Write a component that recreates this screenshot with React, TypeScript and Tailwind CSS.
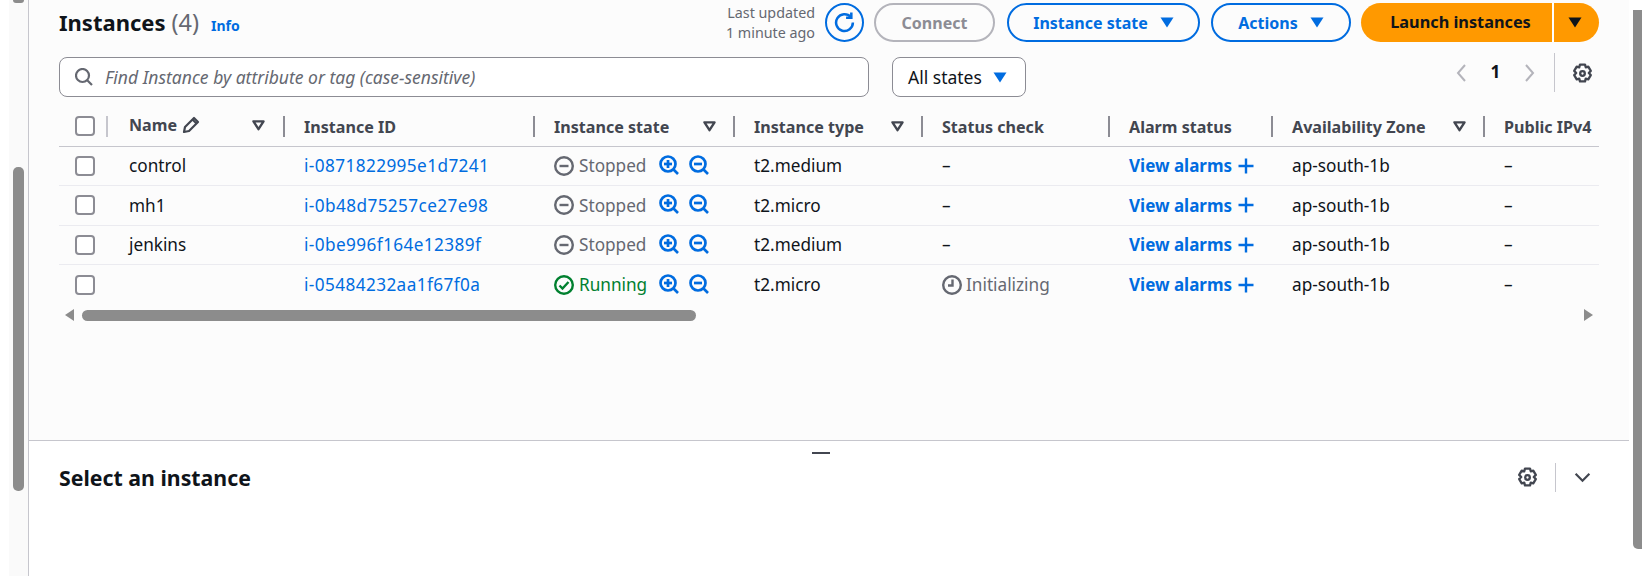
import { FC } from "react";

const Caret: FC<{ className?: string }> = ({ className = "" }) => (
  <svg viewBox="0 0 14 11" className={`w-[14px] h-[11px] ${className}`}>
    <path d="M0.5 0.5h13L7 10.5z" fill="currentColor" />
  </svg>
);

const FilterIcon = () => (
  <svg viewBox="0 0 14 12" className="w-[13px] h-[11px] text-[#424650]">
    <path d="M1.5 1.5h11L7 10z" fill="none" stroke="currentColor" strokeWidth="2.6" strokeLinejoin="round" />
  </svg>
);

const Gear = ({ className = "" }: { className?: string }) => (
  <svg viewBox="0 0 20 20" className={`w-[21px] h-[21px] ${className}`} fill="none" stroke="currentColor" strokeWidth="2.2" strokeLinejoin="round">
    <path d="M7.6 1.5h4.8l.7 2.6 2.4-.7 2.4 4.1-1.9 2 1.9 2-2.4 4.1-2.4-.7-.7 2.6H7.6l-.7-2.6-2.4.7-2.4-4.1 1.9-2-1.9-2 2.4-4.1 2.4.7z" />
    <circle cx="10" cy="10" r="2.2" />
  </svg>
);

const StoppedIcon = () => (
  <svg viewBox="0 0 20 20" className="w-[20px] h-[20px] shrink-0 text-[#656871]" fill="none" stroke="currentColor" strokeWidth="2.4">
    <circle cx="10" cy="10" r="8.8" />
    <path d="M5.5 10h9" />
  </svg>
);

const RunningIcon = () => (
  <svg viewBox="0 0 20 20" className="w-[20px] h-[20px] shrink-0 text-[#00802f]" fill="none" stroke="currentColor" strokeWidth="2.4">
    <circle cx="10" cy="10" r="8.8" />
    <path d="M5.5 10.5l3 3 6-6.5" />
  </svg>
);

const ClockIcon = () => (
  <svg viewBox="0 0 20 20" className="w-[20px] h-[20px] shrink-0 text-[#656871]" fill="none" stroke="currentColor" strokeWidth="2.4">
    <circle cx="10" cy="10" r="8.8" />
    <path d="M10.5 4.5v6h-4.5" />
  </svg>
);

const ZoomIcon = ({ plus }: { plus?: boolean }) => (
  <svg viewBox="0 0 20 20" className="w-[20px] h-[20px] shrink-0 text-[#006ce0]" fill="none" stroke="currentColor" strokeWidth="2.7">
    <circle cx="9" cy="9" r="7.5" />
    <path d="M14.5 14.5l4.5 4.5" />
    <path d="M5 9h8" />
    {plus && <path d="M9 5v8" />}
  </svg>
);

const Divider = () => <span className="w-[2px] h-[21px] bg-[#8c8c94] shrink-0" />;

const columns = [
  { title: "Instance ID" },
  { title: "Instance state", filter: true },
  { title: "Instance type", filter: true },
  { title: "Status check" },
  { title: "Alarm status" },
  { title: "Availability Zone", filter: true },
  { title: "Public IPv4" },
];

const rows = [
  { name: "control", id: "i-0871822995e1d7241", running: false, type: "t2.medium", check: "–" },
  { name: "mh1", id: "i-0b48d75257ce27e98", running: false, type: "t2.micro", check: "–" },
  { name: "jenkins", id: "i-0be996f164e12389f", running: false, type: "t2.medium", check: "–" },
  { name: "", id: "i-05484232aa1f67f0a", running: true, type: "t2.micro", check: "Initializing" },
];

const grid = "grid grid-cols-[49px_175px_250px_200px_188px_187px_163px_212px_116px]";

const Checkbox = () => (
  <span className="block w-[20px] h-[20px] rounded-[4px] border-2 border-[#8c8c94] bg-white ml-[16px]" />
);

const OutlineButton = ({ label, width }: { label: string; width: string }) => (
  <button className={`${width} h-[39px] rounded-full border-2 border-[#006ce0] text-[#006ce0] font-bold text-[16px] flex items-center justify-center gap-[12px]`}>
    {label}
    <Caret />
  </button>
);

export default function App() {
  return (
    <div className="w-[1642px] h-[576px] overflow-hidden flex bg-white text-[17.2px] text-[#0f141a] font-['Noto_Sans',sans-serif]">
      <div className="w-[28px] shrink-0 pl-[13px] border-l-[9px] border-white bg-[#fafafa] flex flex-col box-border">
        <div className="w-[11px] -ml-[9px] h-[3px] bg-[#8c8c8c] rounded-b-[5px]" />
        <div className="w-[11px] -ml-[9px] mt-[164px] h-[324px] bg-[#8c8c8c] rounded-[5px]" />
      </div>
      <div className="w-[1601px] shrink-0 border-l border-[#c6c6cd] flex flex-col">
        <div className="h-[440px] bg-[#fcfcfc] pl-[30px] border-b border-[#c6c6cd] box-content">
          <div className="h-[57px] pr-[30px] flex items-start justify-between pt-[3px]">
            <div className="flex items-baseline mt-[4px]">
              <h1 className="text-[22px] leading-[30px] font-bold">Instances</h1>
              <span className="text-[23.5px] leading-[30px] text-[#656871] ml-[6px]">(4)</span>
              <span className="text-[14px] font-bold text-[#006ce0] ml-[12px]">Info</span>
            </div>
            <div className="flex items-center">
              <div className="h-[39px] text-[14.3px] leading-[19.5px] text-[#656871] text-right mr-[10px]">
                <div>Last updated</div>
                <div>1 minute ago</div>
              </div>
              <button className="w-[39px] h-[39px] rounded-full border-2 border-[#006ce0] text-[#006ce0] flex items-center justify-center mr-[10px]">
                <svg viewBox="0 0 20 20" className="w-[21px] h-[21px]" fill="none" stroke="currentColor" strokeWidth="2.4">
                  <path d="M16 4.8A8 8 0 1 0 18 10" />
                  <path d="M16.5 0.5v5h-5" />
                </svg>
              </button>
              <button className="w-[121px] h-[39px] rounded-full border-2 border-[#b4b4bb] text-[#8c8c94] font-bold text-[16px] mr-[12px]">
                Connect
              </button>
              <OutlineButton label="Instance state" width="w-[193px] mr-[11px]" />
              <OutlineButton label="Actions" width="w-[140px] mr-[10px]" />
              <div className="flex h-[39px] text-[16.3px] font-bold text-[#0f141a]">
                <button className="w-[191px] bg-[#ff9900] rounded-l-full pl-[8px]">Launch instances</button>
                <span className="w-[2px] bg-white" />
                <button className="w-[45px] bg-[#ff9900] rounded-r-full flex items-center justify-center pr-[4px]">
                  <Caret />
                </button>
              </div>
            </div>
          </div>
          <div className="h-[40px] pr-[36px] flex items-start">
            <div className="w-[810px] h-[40px] rounded-[8px] border border-[#8c8c94] bg-white flex items-center pl-[15px] gap-[12px] text-[#656871]">
              <svg viewBox="0 0 18 18" className="w-[18px] h-[18px]" fill="none" stroke="currentColor" strokeWidth="2.2">
                <circle cx="7.5" cy="7.5" r="6.5" />
                <path d="M12.2 12.2L17 17" />
              </svg>
              <span className="italic text-[17.5px]">Find Instance by attribute or tag (case-sensitive)</span>
            </div>
            <div className="w-[134px] h-[40px] ml-[23px] rounded-[8px] border border-[#8c8c94] bg-white flex items-center pl-[15px] gap-[11px] text-[17.5px]">
              All states
              <Caret className="text-[#006ce0]" />
            </div>
            <div className="ml-auto flex items-start -mt-[4px] h-[40px] text-[#b4b4bb]">
              <svg viewBox="0 0 12 20" className="w-[12px] h-[20px] mt-[10px]" fill="none" stroke="currentColor" strokeWidth="2">
                <path d="M10 2L3 10l7 8" />
              </svg>
              <span className="w-[23px] ml-[17px] text-center font-bold text-[#0f141a] leading-[38px]">1</span>
              <svg viewBox="0 0 12 20" className="w-[12px] h-[20px] mt-[10px] ml-[17px]" fill="none" stroke="currentColor" strokeWidth="2">
                <path d="M2 2l7 8-7 8" />
              </svg>
              <span className="w-px h-[39px] bg-[#c6c6cd] ml-[18px]" />
              <Gear className="text-[#424650] mt-[10px] ml-[17px]" />
            </div>
          </div>
          <div className="w-[1540px] overflow-hidden">
            <div className={`${grid} h-[50px] border-b border-[#c6c6cd] font-bold text-[16.1px] text-[#424650] pt-[9px] items-center`}>
              <div className="flex items-center justify-between">
                <Checkbox />
                <span className="w-[2px] h-[21px] bg-[#c6c6cd]" />
              </div>
              <div className="flex items-center justify-between pl-[21px] pr-[18px]">
                <span className="flex items-center gap-[5px] -mt-[2px]">
                  Name
                  <svg viewBox="0 0 18 18" className="w-[18px] h-[18px]" fill="none" stroke="currentColor" strokeWidth="2.2" strokeLinejoin="round">
                    <path d="M2 16l1-5L12 2l4 4-9 9z" />
                    <path d="M10.5 3.5l4 4" />
                  </svg>
                </span>
                <FilterIcon />
              </div>
              {columns.map((col) => (
                <div key={col.title} className="flex items-center h-[21px] whitespace-nowrap">
                  <Divider />
                  <span className="ml-[19px] mt-[2px]">{col.title}</span>
                  {col.filter && (
                    <span className="ml-auto mr-[17px]">
                      <FilterIcon />
                    </span>
                  )}
                </div>
              ))}
            </div>
            {rows.map((row, i) => (
              <div key={row.id} className={`${grid} h-[39.3px] items-center ${i < rows.length - 1 ? "border-b border-[#ebebf0]" : ""}`}>
                <Checkbox />
                <div className="pl-[21px]">{row.name}</div>
                <div className="pl-[21px] text-[#006ce0] tracking-[0.4px]">{row.id}</div>
                <div className="pl-[21px] flex items-center">
                  {row.running ? <RunningIcon /> : <StoppedIcon />}
                  <span className={`ml-[5px] w-[80px] ${row.running ? "text-[#00802f]" : "text-[#656871]"}`}>
                    {row.running ? "Running" : "Stopped"}
                  </span>
                  <span className="flex gap-[10px] -mt-[2px]">
                    <ZoomIcon plus />
                    <ZoomIcon />
                  </span>
                </div>
                <div className="pl-[21px]">{row.type}</div>
                <div className="pl-[21px] flex items-center gap-[4px]">
                  {row.check === "–" ? row.check : (
                    <>
                      <ClockIcon />
                      <span className="text-[#656871]">{row.check}</span>
                    </>
                  )}
                </div>
                <div className="pl-[21px] flex items-center gap-[6px] text-[#006ce0] font-bold text-[17px]">
                  View alarms
                  <svg viewBox="0 0 16 16" className="w-[16px] h-[16px]" fill="none" stroke="currentColor" strokeWidth="2.4">
                    <path d="M8 0.5v15M0.5 8h15" />
                  </svg>
                </div>
                <div className="pl-[21px]">ap-south-1b</div>
                <div className="pl-[21px]">–</div>
              </div>
            ))}
            <div className="flex items-center h-[12px] mt-[5px] pl-[6px]">
              <svg viewBox="0 0 9 12" className="w-[9px] h-[12px] text-[#8c8c8c]"><path d="M9 0v12L0 6z" fill="currentColor" /></svg>
              <span className="w-[614px] h-[11px] ml-[8px] rounded-full bg-[#8c8c8c]" />
              <svg viewBox="0 0 9 12" className="w-[9px] h-[12px] ml-auto mr-[6px] text-[#8c8c8c]"><path d="M0 0v12l9-6z" fill="currentColor" /></svg>
            </div>
          </div>
        </div>
        <div className="flex-1 bg-white pl-[30px] pr-[38px] flex flex-col">
          <span className="self-center w-[18px] h-[2px] bg-[#424650] mt-[11px] -ml-[8px]" />
          <div className="flex items-center justify-between mt-[4px] h-[39px]">
            <h2 className="text-[21.3px] font-bold">Select an instance</h2>
            <div className="flex items-center text-[#424650]">
              <Gear />
              <span className="w-px h-[29px] bg-[#c6c6cd] ml-[17px]" />
              <svg viewBox="0 0 18 12" className="w-[17px] h-[11px] ml-[18px]" fill="none" stroke="currentColor" strokeWidth="2.4">
                <path d="M1.5 2L9 9.5 16.5 2" />
              </svg>
            </div>
          </div>
        </div>
      </div>
      <div className="flex-1 bg-white flex justify-end">
        <div className="w-[9px] h-[539px] mt-[10px] bg-[#8c8c8c] rounded-bl-[5px]" />
      </div>
    </div>
  );
}
